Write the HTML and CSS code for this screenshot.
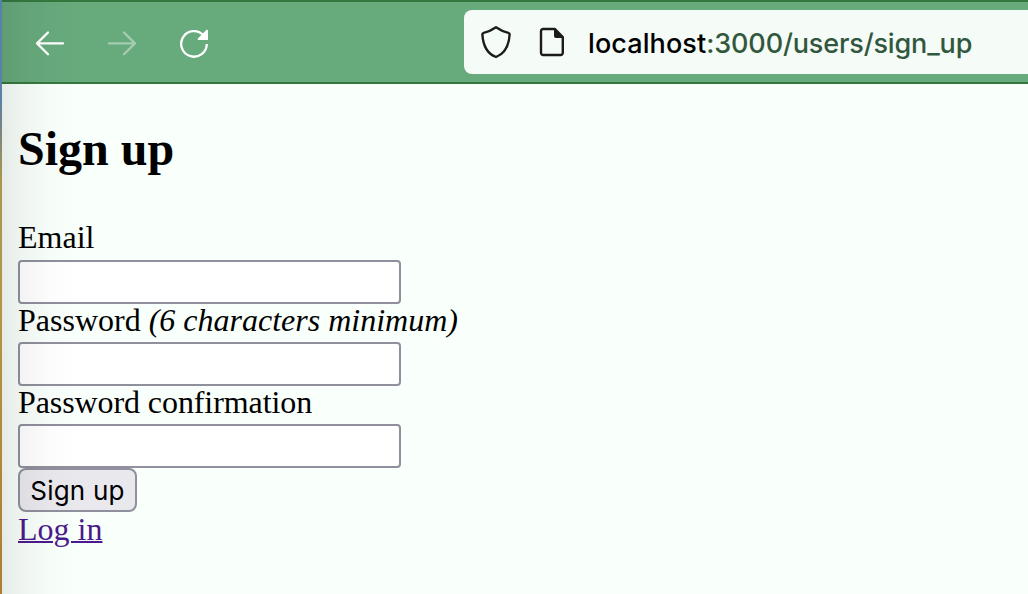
FILE: index.html
```html
<!DOCTYPE html>
<html lang="en">
<head>
<meta charset="utf-8">
<title>Sign up</title>
<link rel="stylesheet" href="styles.css">
</head>
<body>
<div class="screen">
  <div class="window">
    <header class="toolbar">
      <nav class="nav">
        <svg class="icon" width="32" height="32" viewBox="0 0 32 32"><path d="M29 15.400H3M14 4.500 3 15.400l11 10.900"/></svg>
        <svg class="icon icon-disabled" width="32" height="32" viewBox="0 0 32 32"><path d="M3 15.400h26M18 4.500l11 10.900-11 10.900"/></svg>
        <svg class="icon" width="32" height="32" viewBox="0 0 32 32"><path class="arc" d="M25.200 7A12.800 12.800 0 1 0 28.800 16"/><path class="solid" d="M30 3v9h-9c-1.300 0-1.700-1-.9-1.800l8.200-8.200c.7-.7 1.700-.3 1.700 1z"/></svg>
      </nav>
      <div class="urlbar">
        <svg class="url-icon" width="32" height="36" viewBox="0 0 32 36"><path d="M16 3.200c4.200 2.900 8.200 4.700 12.300 5.600.9.200 1.400.9 1.300 1.800-.6 9.400-3.600 18.600-13.600 22.400C6 29.200 3 20 2.400 10.600c-.1-.9.400-1.600 1.300-1.800C7.800 7.900 11.800 6.100 16 3.200z"/></svg>
        <svg class="url-icon page-icon" width="26" height="32" viewBox="0 0 26 32"><path d="M4.200 3H16l7.800 8v15.800a2.200 2.200 0 0 1-2.200 2.200H4.200A2.200 2.200 0 0 1 2 26.800V5.200A2.200 2.200 0 0 1 4.200 3z"/><path class="fold" d="M15 2l10 10H17a2 2 0 0 1-2-2z"/></svg>
        <div class="url"><span class="host">localhost</span>:3000/users/sign_up</div>
      </div>
    </header>
    <main class="page">
      <h2 class="title">Sign up</h2>
      <form class="form">
        <label class="label label-first" for="email">Email</label>
        <input class="input" id="email" type="email">
        <label class="label" for="password">Password <em>(6 characters minimum)</em></label>
        <input class="input" id="password" type="password">
        <label class="label label-tight" for="confirmation">Password confirmation</label>
        <input class="input" id="confirmation" type="password">
        <button class="button" type="button">Sign up</button>
      </form>
      <a class="link" href="#">Log in</a>
    </main>
    <div class="edge-shade"></div>
  </div>
</div>
</body>
</html>
```
FILE: styles.css
```css
* { box-sizing: border-box; }
body { margin: 0; overflow: hidden; }
.screen {
  height: 594px;
  padding-left: 2px;
  background: linear-gradient(#5882ae 0, #5882a6 100px, #6c8090 115px, #a9964e 180px, #b39647 300px, #ad7d35 594px);
}
.window {
  position: relative;
  height: 100%;
  background: #f9fffb;
  overflow: hidden;
}
.toolbar {
  display: flex;
  height: 84px;
  border-top: 2px solid #35783f;
  border-bottom: 2px solid #35783f;
  background: #67aa7c;
}
.nav {
  display: flex;
  align-items: center;
  gap: 40px;
  width: 462px;
  padding: 4px 0 0 32px;
}
.icon { fill: none; stroke: #fff; stroke-width: 2.3; stroke-linecap: round; stroke-linejoin: round; }
.icon-disabled { opacity: .4; }
.arc { stroke-linecap: butt; }
.solid { fill: #fff; stroke: none; }
.urlbar {
  display: flex;
  align-items: center;
  flex: 1;
  margin: 8px 0;
  padding-left: 16px;
  border-radius: 8px 0 0 8px;
  background: #f5fbf7;
  white-space: nowrap;
}
.url-icon { flex: none; fill: none; stroke: #1b1b1b; stroke-width: 2.4; stroke-linejoin: round; }
.page-icon { margin-left: 27px; }
.fold { fill: #1b1b1b; stroke: none; }
.url {
  margin-left: 23px;
  padding-top: 3px;
  font: 450 27px/34px Inter, sans-serif;
  letter-spacing: -.15px;
  color: #31583d;
}
.host { color: #000; letter-spacing: .1px; }
.page {
  padding: 37px 16px 0;
  font: 32px/34px "Liberation Serif", serif;
  color: #000;
}
.title {
  margin: 0 0 44px;
  font-size: 48px;
  line-height: 56px;
  font-weight: bold;
}
.form { display: flex; flex-direction: column; align-items: flex-start; }
.label { padding-bottom: 6px; line-height: 32px; }
.label-first { padding-bottom: 7px; }
.label-tight { letter-spacing: -.09px; }
.input {
  width: 383px;
  height: 44px;
  margin: 0;
  border: 2px solid #8f8f9d;
  border-radius: 4px;
  background: #fff;
}
.button {
  width: 119px;
  height: 44px;
  padding: 2px 0 0;
  border: 2px solid #8f8f9d;
  border-radius: 8px;
  background: #e9e9ed;
  font: 26px/38px Inter, sans-serif;
  letter-spacing: .2px;
  color: #000;
}
.link { display: block; width: max-content; color: #4b1a8c; text-decoration-thickness: 2px; }
.edge-shade {
  position: absolute;
  inset: 0 auto 0 0;
  width: 80px;
  pointer-events: none;
  background: linear-gradient(90deg, rgba(0,0,0,.08), rgba(0,0,0,.045) 25%, rgba(0,0,0,.012) 60%, transparent);
}
```
